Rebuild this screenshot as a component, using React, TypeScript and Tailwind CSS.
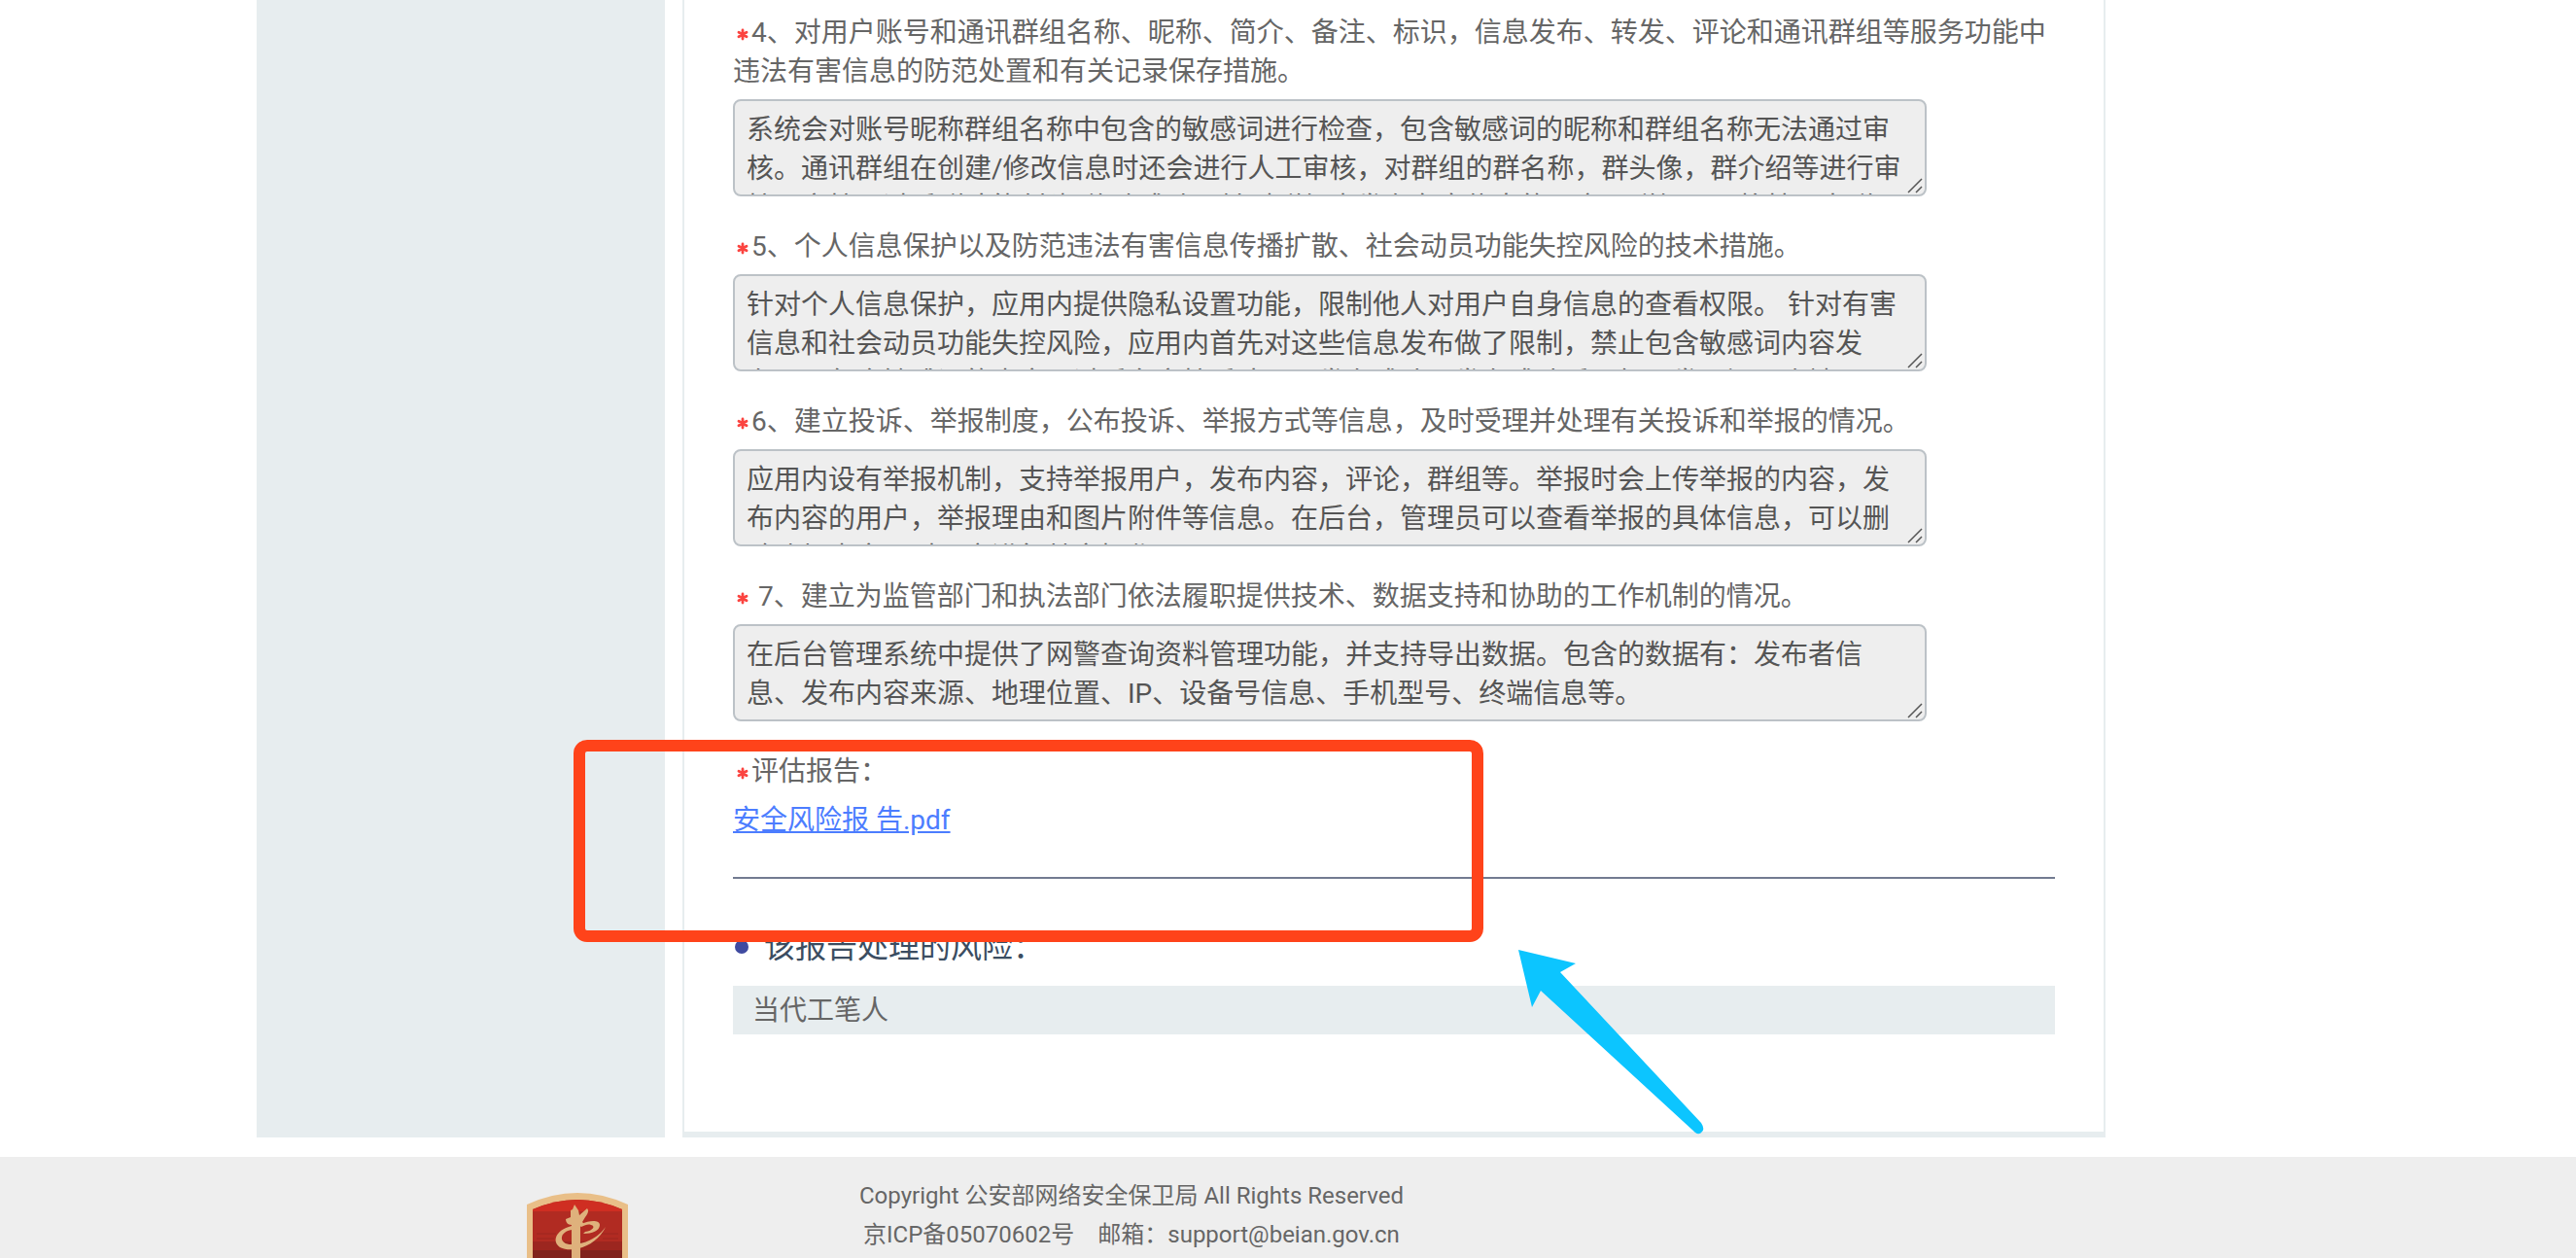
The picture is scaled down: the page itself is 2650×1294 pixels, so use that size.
import { useId } from 'react';

const measures = [
  {
    title: '4、对用户账号和通讯群组名称、昵称、简介、备注、标识，信息发布、转发、评论和通讯群组等服务功能中违法有害信息的防范处置和有关记录保存措施。',
    value:
      '系统会对账号昵称群组名称中包含的敏感词进行检查，包含敏感词的昵称和群组名称无法通过审核。通讯群组在创建/修改信息时还会进行人工审核，对群组的群名称，群头像，群介绍等进行审核，审核通过后群才能创建/修改成功。针对群组内发布有害信息的用户，群组可以将其踢出群组。',
  },
  {
    title: '5、个人信息保护以及防范违法有害信息传播扩散、社会动员功能失控风险的技术措施。',
    value:
      '针对个人信息保护，应用内提供隐私设置功能，限制他人对用户自身信息的查看权限。 针对有害信息和社会动员功能失控风险，应用内首先对这些信息发布做了限制，禁止包含敏感词内容发布，且包含敏感词的内容通过后台审核后才可以发布成功，发布成功后，如果发现问题会被下架。',
  },
  {
    title: '6、建立投诉、举报制度，公布投诉、举报方式等信息，及时受理并处理有关投诉和举报的情况。',
    value:
      '应用内设有举报机制，支持举报用户，发布内容，评论，群组等。举报时会上传举报的内容，发布内容的用户，举报理由和图片附件等信息。在后台，管理员可以查看举报的具体信息，可以删除违规内容，对用户进行禁言操作。',
  },
  {
    title: ' 7、建立为监管部门和执法部门依法履职提供技术、数据支持和协助的工作机制的情况。',
    value:
      '在后台管理系统中提供了网警查询资料管理功能，并支持导出数据。包含的数据有：发布者信息、发布内容来源、地理位置、IP、设备号信息、手机型号、终端信息等。',
  },
];

function RequiredMark() {
  return (
    <svg viewBox="0 0 12 14" className="inline-block w-3 h-[14px] ml-1 mr-[3px]" aria-hidden="true">
      <path
        d="M6 2v9M2 4.2l8 4.6M10 4.2l-8 4.6"
        stroke="#fb4440"
        strokeWidth="2.8"
        strokeLinecap="round"
      />
    </svg>
  );
}

function Measure({ title, value }: { title: string; value: string }) {
  const id = useId();

  return (
    <div className="mb-8">
      <label htmlFor={id} className="block mb-2 whitespace-pre-wrap">
        <RequiredMark />
        {title}
      </label>
      <div className="relative w-full max-w-[1228px]">
        <textarea
          id={id}
          readOnly
          defaultValue={value}
          className="block w-full h-[100px] px-3 pt-[10px] bg-[#eeeeee] border-2 border-[#bcc2c7] rounded-lg text-[#555555] resize-none overflow-hidden"
        />
        <svg
          viewBox="0 0 16 16"
          className="absolute right-1 bottom-[3px] w-4 h-4 pointer-events-none"
          aria-hidden="true"
        >
          <path d="M1 15L15 1M9 15l6-6" stroke="#555555" strokeWidth="1.5" />
        </svg>
      </div>
    </div>
  );
}

function Emblem() {
  return (
    <svg viewBox="0 0 104 116" className="w-[104px] h-[116px] shrink-0" aria-hidden="true">
      <path d="M0 12Q52-12 104 12V78Q98 100 52 116Q6 100 0 78Z" fill="#e9bf88" />
      <path d="M6 17Q52-3 98 17V76Q92 94 52 108Q12 94 6 76Z" fill="#b12b22" />
      <path d="M6 17Q52-3 98 17V19H6Z" fill="#cf2e22" />
      <path d="M6 50h92v9H6z" fill="#9c261f" />
      <path d="M6 59h92v17Q92 94 52 108Q12 94 6 76Z" fill="#80231d" />
      <path d="M10 42h20M10 47h18M76 42h18M78 47h16" stroke="#9c261f" strokeWidth="1" />
      <path
        d="M49 12l4 6 1 5 8-7c2 2 1 5-2 9l-3 5 2 2-4 3v79h-9V33c-4 0-6-3-6-6l5-2v-7l2-1z"
        fill="#dfb17c"
      />
      <path
        d="M46 34C30 38 25 50 34 56c14 7 38-2 47-21-8 12-22 18-35 18-14 0-13-13 0-15z"
        fill="#dfb17c"
      />
      <path d="M56 32c9-4 19-4 19 1 0 6-8 9-17 9l2-2c8-1 11-6 6-7-3-1-6 0-10 2z" fill="#dfb17c" />
    </svg>
  );
}

// Marks drawn over the page: the highlighted area and the arrow that points at it
function Annotations() {
  return (
    <>
      <div className="absolute left-[590px] top-[761px] w-[936px] h-[208px] border-12 border-[#ff431a] rounded-[14px] pointer-events-none" />
      <svg
        viewBox="0 0 192 192"
        className="absolute left-[1562px] top-[976px] w-48 h-48 pointer-events-none"
        aria-hidden="true"
      >
        <path d="M0 1L59 15L43 24L188 179Q192 185 189 188Q186 192 182 189L23 43L14 60Z" fill="#0cc5ff" />
      </svg>
    </>
  );
}

export default function App() {
  return (
    <div className="relative min-h-screen overflow-hidden flex flex-col bg-white text-[#666666] text-[28px] leading-10 font-[Roboto,'Noto_Sans_CJK_SC',sans-serif]">
      <div className="w-full max-w-[2122px] mx-auto flex gap-[18px] mb-5">
        <aside className="w-[420px] shrink-0 bg-[#e7edef]" />

        <main className="flex-1 max-w-[1464px] px-[50px] pt-[14px] pb-[100px] border-x-2 border-b-6 border-[#e7edef]">
          {measures.map(measure => (
            <Measure key={measure.title} {...measure} />
          ))}

          <section className="pb-[38px] border-b-2 border-[#727b91]">
            <p className="mb-[10px]">
              <RequiredMark />
              评估报告：
            </p>
            <a href="#report" className="block w-fit text-[#4c7dff] underline">
              安全风险报 告.pdf
            </a>
          </section>

          <section>
            <h2 className="flex items-center mt-[50px] mb-5 text-[32px] text-[#3b4d61]">
              <span className="w-[14px] h-[14px] ml-[2px] mr-4 rounded-full bg-[#3f4aa0]" />
              该报告处理的风险：
            </h2>
            <p className="px-5 pt-[6px] pb-1 bg-[#e7edef]">当代工笔人</p>
          </section>
        </main>
      </div>

      <footer className="bg-[#eeeeee] flex-1 h-[104px] overflow-hidden">
        <div className="w-full max-w-[2122px] mx-auto flex pl-[278px] pt-5 text-2xl leading-10">
          <div className="pt-[17px]">
            <Emblem />
          </div>
          <div className="ml-[238px] text-center">
            <p>Copyright 公安部网络安全保卫局 All Rights Reserved</p>
            <p>京ICP备05070602号　邮箱：support@beian.gov.cn</p>
          </div>
        </div>
      </footer>

      <Annotations />
    </div>
  );
}
